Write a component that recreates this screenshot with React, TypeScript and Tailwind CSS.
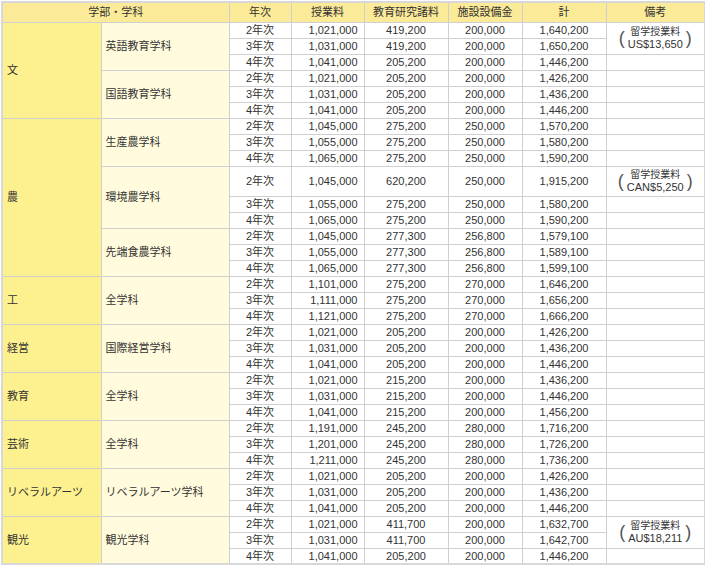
import React from "react";

type Row = [string, string, string, string, string];
type Dept = { name: string; rows: Row[]; note?: { at: number; span: number; cur: string }; tall?: number };
type Fac = { name: string; depts: Dept[] };

const y = ["2年次", "3年次", "4年次"];
const mk = (a: string[][]): Row[] => a.map((r, i) => [y[i], r[0], r[1], r[2], r[3]] as Row);

const data: Fac[] = [
  { name: "文", depts: [
    { name: "英語教育学科", rows: mk([["1,021,000","419,200","200,000","1,640,200"],["1,031,000","419,200","200,000","1,650,200"],["1,041,000","205,200","200,000","1,446,200"]]), note: { at: 0, span: 2, cur: "US$13,650" } },
    { name: "国語教育学科", rows: mk([["1,021,000","205,200","200,000","1,426,200"],["1,031,000","205,200","200,000","1,436,200"],["1,041,000","205,200","200,000","1,446,200"]]) },
  ]},
  { name: "農", depts: [
    { name: "生産農学科", rows: mk([["1,045,000","275,200","250,000","1,570,200"],["1,055,000","275,200","250,000","1,580,200"],["1,065,000","275,200","250,000","1,590,200"]]) },
    { name: "環境農学科", rows: mk([["1,045,000","620,200","250,000","1,915,200"],["1,055,000","275,200","250,000","1,580,200"],["1,065,000","275,200","250,000","1,590,200"]]), note: { at: 0, span: 1, cur: "CAN$5,250" }, tall: 0 },
    { name: "先端食農学科", rows: mk([["1,045,000","277,300","256,800","1,579,100"],["1,055,000","277,300","256,800","1,589,100"],["1,065,000","277,300","256,800","1,599,100"]]) },
  ]},
  { name: "工", depts: [{ name: "全学科", rows: mk([["1,101,000","275,200","270,000","1,646,200"],["1,111,000","275,200","270,000","1,656,200"],["1,121,000","275,200","270,000","1,666,200"]]) }]},
  { name: "経営", depts: [{ name: "国際経営学科", rows: mk([["1,021,000","205,200","200,000","1,426,200"],["1,031,000","205,200","200,000","1,436,200"],["1,041,000","205,200","200,000","1,446,200"]]) }]},
  { name: "教育", depts: [{ name: "全学科", rows: mk([["1,021,000","215,200","200,000","1,436,200"],["1,031,000","215,200","200,000","1,446,200"],["1,041,000","215,200","200,000","1,456,200"]]) }]},
  { name: "芸術", depts: [{ name: "全学科", rows: mk([["1,191,000","245,200","280,000","1,716,200"],["1,201,000","245,200","280,000","1,726,200"],["1,211,000","245,200","280,000","1,736,200"]]) }]},
  { name: "リベラルアーツ", depts: [{ name: "リベラルアーツ学科", rows: mk([["1,021,000","205,200","200,000","1,426,200"],["1,031,000","205,200","200,000","1,436,200"],["1,041,000","205,200","200,000","1,446,200"]]) }]},
  { name: "観光", depts: [{ name: "観光学科", rows: mk([["1,021,000","411,700","200,000","1,632,700"],["1,031,000","411,700","200,000","1,642,700"],["1,041,000","205,200","200,000","1,446,200"]]), note: { at: 0, span: 2, cur: "AU$18,211" } }]},
];

const td = "border border-[#cfcfcf] px-[4px] py-0 leading-[14px]";

function Note({ cur }: { cur: string }) {
  return (
    <div className="flex items-center justify-center gap-[3px] h-[26px] overflow-hidden">
      <span className="text-[18px] leading-none font-light text-[#555]">(</span>
      <div className="flex flex-col items-center leading-[13px]">
        <span className="text-[10px]">留学授業料</span>
        <span>{cur}</span>
      </div>
      <span className="text-[18px] leading-none font-light text-[#555]">)</span>
    </div>
  );
}

export default function App() {
  const rows: React.ReactNode[] = [];
  data.forEach((f, fi) => {
    const facSpan = f.depts.length * 3;
    f.depts.forEach((d, di) => {
      d.rows.forEach((r, ri) => {
        const h = d.tall === ri ? "h-[30px]" : "h-[16px]";
        let noteCell: React.ReactNode = null;
        if (d.note) {
          if (ri === d.note.at) noteCell = <td className={`${td} px-0`} rowSpan={d.note.span}><Note cur={d.note.cur} /></td>;
          else if (ri >= d.note.at + d.note.span) noteCell = <td className={td}></td>;
        } else noteCell = <td className={td}></td>;
        rows.push(
          <tr key={`${fi}-${di}-${ri}`} className={h}>
            {di === 0 && ri === 0 && (
              <td rowSpan={facSpan} className={`${td} bg-[#fdf18f] align-middle`}>{f.name}</td>
            )}
            {ri === 0 && <td rowSpan={3} className={`${td} bg-[#fffbdc] align-middle`}>{d.name}</td>}
            <td className={`${td} text-center`}>{r[0]}</td>
            <td className={`${td} text-right pr-[6px]`}>{r[1]}</td>
            <td className={`${td} text-center`}>{r[2]}</td>
            <td className={`${td} text-center`}>{r[3]}</td>
            <td className={`${td} text-center`}>{r[4]}</td>
            {noteCell}
          </tr>
        );
      });
    });
  });
  const th = "border border-[#cfcfcf] bg-[#fbea98] font-normal text-center leading-[18px] px-0";
  return (
    <div className="w-[705px] h-[565px] bg-white p-[1px] text-[11px] text-[#333]" style={{ fontFamily: '"Liberation Sans", "Noto Sans CJK JP", sans-serif' }}>
      <table className="table-fixed border-collapse w-[703px] border-2 border-[#d8d8d8]">
        <colgroup>
          <col className="w-[99px]" /><col className="w-[128px]" /><col className="w-[62px]" /><col className="w-[73px]" />
          <col className="w-[84px]" /><col className="w-[74px]" /><col className="w-[84px]" /><col className="w-[99px]" />
        </colgroup>
        <thead>
          <tr className="h-[20px]">
            <th className={th} colSpan={2}>学部・学科</th>
            <th className={th}>年次</th>
            <th className={th}>授業料</th>
            <th className={`${th} whitespace-nowrap`}>教育研究諸料</th>
            <th className={th}>施設設備金</th>
            <th className={th}>計</th>
            <th className={th}>備考</th>
          </tr>
        </thead>
        <tbody>{rows}</tbody>
      </table>
    </div>
  );
}
